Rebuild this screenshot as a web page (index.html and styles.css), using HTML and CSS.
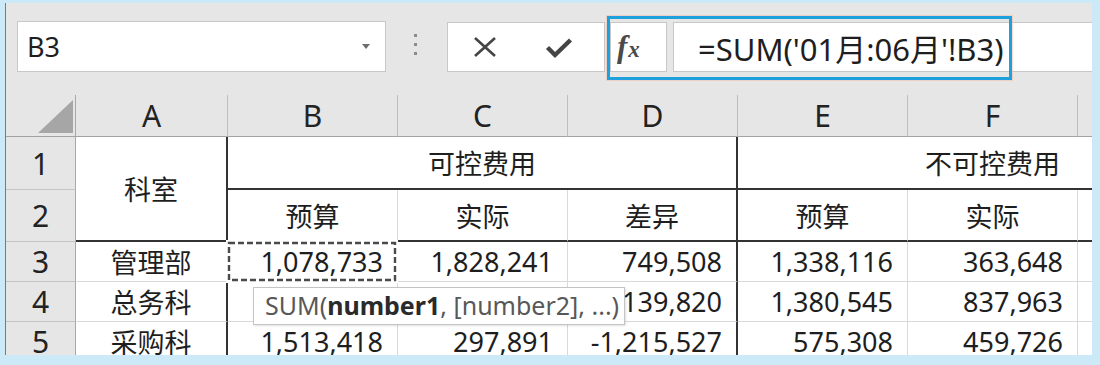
FILE: index.html
```html
<!DOCTYPE html>
<html lang="zh-CN">
<head>
<meta charset="utf-8">
<title>Excel</title>
<link rel="stylesheet" href="styles.css">
</head>
<body>
<div class="frame">
  <div class="toolbar">
    <div class="namebox"><span>B3</span><span class="caret"></span></div>
    <div class="grip"><i></i><i></i><i></i></div>
    <div class="actions">
      <svg class="ico-x" width="24" height="22" viewBox="0 0 24 22"><path d="M2 2 L22 20 M22 2 L2 20" stroke="#454545" stroke-width="2.6" fill="none"/></svg>
      <svg class="ico-ok" width="28" height="22" viewBox="0 0 28 22"><path d="M2.5 10.5 L10 18 L25.5 3" stroke="#454545" stroke-width="4.4" fill="none" stroke-linejoin="miter"/></svg>
    </div>
    <div class="fx"><span class="f">f</span><span class="x">x</span></div>
    <div class="formula">=SUM('01月:06月'!B3)</div>
    <div class="highlight"></div>
  </div>
  <div class="sheet">
    <div class="corner"><span class="tri"></span></div>
    <div class="hd">A</div>
    <div class="hd">B</div>
    <div class="hd">C</div>
    <div class="hd">D</div>
    <div class="hd">E</div>
    <div class="hd">F</div>
    <div class="hd"></div>

    <div class="rh">1</div>
    <div class="c span2 dr db">科室</div>
    <div class="c span3c dr db">可控费用</div>
    <div class="c span3c db">不可控费用</div>

    <div class="rh">2</div>
    <div class="c db">预算</div>
    <div class="c db">实际</div>
    <div class="c dr db">差异</div>
    <div class="c db">预算</div>
    <div class="c db">实际</div>
    <div class="c db"></div>

    <div class="rh">3</div>
    <div class="c dr">管理部</div>
    <div class="c num sel">1,078,733<svg class="ants" width="172" height="43" viewBox="0 0 172 43"><rect x="2" y="2" width="168" height="39" fill="none" stroke="#fff" stroke-width="4"/><rect x="3" y="3" width="166" height="37" fill="none" stroke="#4a4a4a" stroke-width="2.4" stroke-dasharray="6 3"/></svg></div>
    <div class="c num">1,828,241</div>
    <div class="c num dr">749,508</div>
    <div class="c num">1,338,116</div>
    <div class="c num">363,648</div>
    <div class="c"></div>

    <div class="rh">4</div>
    <div class="c dr">总务科</div>
    <div class="c num"></div>
    <div class="c num"></div>
    <div class="c num dr">139,820</div>
    <div class="c num">1,380,545</div>
    <div class="c num">837,963</div>
    <div class="c"></div>

    <div class="rh">5</div>
    <div class="c dr">采购科</div>
    <div class="c num">1,513,418</div>
    <div class="c num">297,891</div>
    <div class="c num dr">-1,215,527</div>
    <div class="c num">575,308</div>
    <div class="c num">459,726</div>
    <div class="c"></div>

    <div class="tip">SUM(<b>number1</b>, [number2], ...)</div>
  </div>
</div>
</body>
</html>
```

FILE: styles.css
```css
* { box-sizing: border-box; }

body {
  margin: 0;
  background: #cce9f7;
  font-family: "Noto Sans", "Noto Sans CJK SC", sans-serif;
  color: #1e1e1e;
}

.frame {
  margin: 3px 0 0 5px;
  width: 1087px;
  height: 352px;
  overflow: hidden;
  border-left: 1px solid #7a7a7a;
  background: #e6e6e6;
}

/* ---------- formula toolbar ---------- */
.toolbar {
  position: relative;
  height: 92px;
  display: flex;
  align-items: flex-start;
  padding: 18px 0 0 11px;
}

.namebox {
  width: 369px;
  height: 51px;
  background: #fff;
  border: 1px solid #c8c8c8;
  display: flex;
  align-items: center;
  justify-content: space-between;
  padding: 0 15px 0 9px;
  font-size: 27px;
}

.caret {
  width: 0;
  height: 0;
  border-left: 4px solid transparent;
  border-right: 4px solid transparent;
  border-top: 5px solid #6e6e6e;
}

.grip {
  margin: 13px 0 0 28px;
  display: flex;
  flex-direction: column;
  gap: 6px;
}
.grip i {
  display: block;
  width: 3px;
  height: 3px;
  background: #8c8c8c;
}

.actions {
  margin: 1px 0 0 30px;
  width: 158px;
  height: 50px;
  background: #fff;
  border: 1px solid #c8c8c8;
  display: flex;
  align-items: center;
}
.ico-x { margin-left: 25px; }
.ico-ok { margin-left: 48px; margin-top: 1px; }

.fx {
  margin: 1px 0 0 5px;
  width: 57px;
  height: 50px;
  background: #fff;
  border: 1px solid #c8c8c8;
  display: flex;
  align-items: center;
  padding-left: 6px;
  font-family: "Liberation Serif", "DejaVu Serif", serif;
  font-style: italic;
  font-weight: 700;
  color: #4a4a4a;
}
.fx .f { font-size: 31px; }
.fx .x { font-size: 23px; margin-left: 1px; margin-top: 5px; }

.formula {
  margin: 1px 0 0 6px;
  flex: 1;
  height: 50px;
  background: #fff;
  border: 1px solid #c8c8c8;
  border-right: none;
  display: flex;
  align-items: center;
  padding-left: 24px;
  font-size: 31px;
  white-space: nowrap;
}

.highlight {
  position: absolute;
  left: 601px;
  top: 13px;
  width: 405px;
  height: 64px;
  border: 3px solid #1ea0dc;
  box-shadow: 0 0 0 1px rgba(240, 190, 170, 0.55);
}

/* ---------- sheet grid ---------- */
.sheet {
  position: relative;
  display: grid;
  grid-template-columns: 70px 152px repeat(6, 170px);
  grid-template-rows: 42px 53px 52px 40px 40px 40px;
}

.corner {
  background: #e6e6e6;
  border-right: 1px solid #a8a8a8;
  border-bottom: 1px solid #a3a3a3;
  display: flex;
  justify-content: flex-end;
  align-items: flex-end;
  padding: 0 2px 3px 0;
}
.tri {
  width: 35px;
  height: 33px;
  background: #a6a6a6;
  clip-path: polygon(100% 0, 100% 100%, 0 100%);
}

.hd {
  background: #e6e6e6;
  border-right: 1px solid #bdbdbd;
  border-bottom: 1px solid #a3a3a3;
  display: flex;
  align-items: center;
  justify-content: center;
  font-size: 30px;
  color: #222;
}

.rh {
  background: #e6e6e6;
  border-right: 1px solid #a8a8a8;
  border-bottom: 1px solid #c4c4c4;
  display: flex;
  align-items: center;
  justify-content: center;
  font-size: 30px;
  color: #222;
}

.c {
  background: #fff;
  border-right: 1px solid #d9d9d9;
  border-bottom: 1px solid #d9d9d9;
  display: flex;
  align-items: center;
  justify-content: center;
  font-size: 27px;
  white-space: nowrap;
}
.num {
  justify-content: flex-end;
  padding-right: 14px;
}
.dr { border-right: 2px solid #333; }
.db { border-bottom: 2px solid #333; }
.span2 { grid-row: span 2; }
.span3c { grid-column: span 3; }

.sel { position: relative; }
.ants {
  position: absolute;
  left: -2px;
  top: -2px;
}

.tip {
  position: absolute;
  left: 247px;
  top: 192px;
  width: 372px;
  height: 38px;
  background: #fff;
  border: 1px solid #c4c4c4;
  box-shadow: 1px 1px 2px rgba(0, 0, 0, 0.12);
  padding-left: 11px;
  font-size: 25px;
  line-height: 35px;
  color: #585858;
  white-space: nowrap;
}
.tip b {
  font-weight: 700;
  color: #2a2a2a;
}
```
